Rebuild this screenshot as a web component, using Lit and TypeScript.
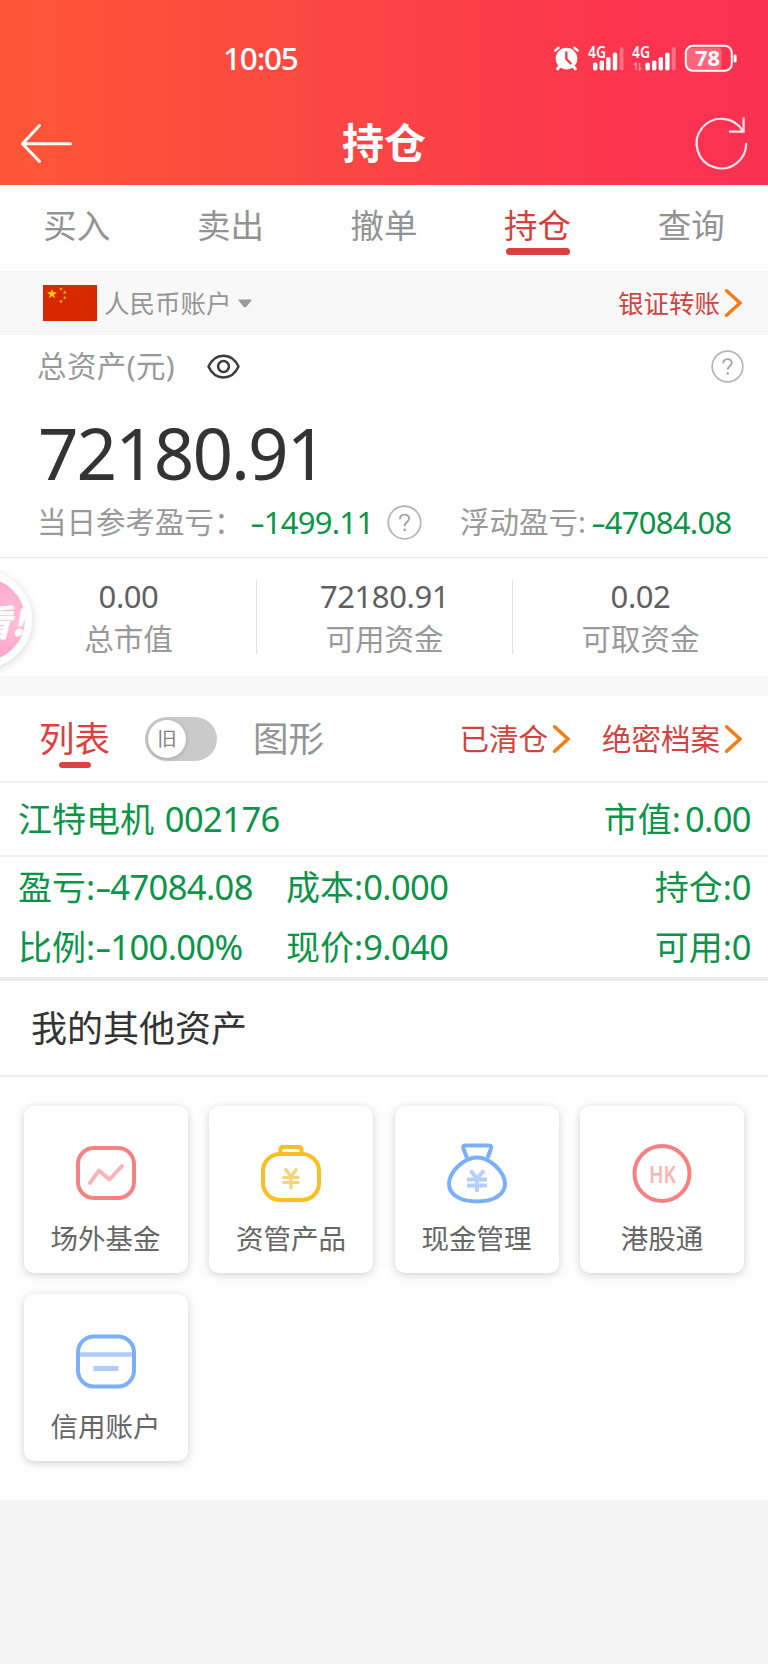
import { LitElement, html, svg, css } from "lit";
import { customElement, property, state } from "lit/decorators.js";

const base = css`
  :host {
    display: block;
    box-sizing: border-box;
    font-family: "Noto Sans", "Noto Sans CJK SC", sans-serif;
  }
  * {
    box-sizing: border-box;
  }
  svg {
    display: block;
    flex: none;
  }
  span,
  .t {
    white-space: nowrap;
    flex: none;
  }
  .minus {
    display: inline-block;
    width: 0.44em;
    transform: scaleX(1.5);
    transform-origin: left;
  }
`;

const chevron = html`<svg width="19" height="30" viewBox="0 0 19 30">
  <path d="M2.6 2.8 L16 15 L2.6 27.2" fill="none" stroke="#f57c14" stroke-width="3.5" stroke-linecap="round" />
</svg>`;

const minus = html`<span class="minus">-</span>`;

const help = (size: number) => html`<svg width=${size} height=${size} viewBox="0 0 34 34">
  <circle cx="17" cy="17" r="15.8" fill="none" stroke="#b4b4b4" stroke-width="1.7" />
  <path d="M12.6 13.8 C12.6 8 21.4 8 21.4 13.2 C21.4 16.6 17.2 16.6 17.2 20.4" fill="none" stroke="#a2a2a2" stroke-width="1.8" />
  <circle cx="17.2" cy="24.2" r="1.3" fill="#a2a2a2" />
</svg>`;

@customElement("top-header")
class TopHeader extends LitElement {
  static styles = [
    base,
    css`
      :host {
        height: 185px;
        color: #fff;
        background: linear-gradient(90deg, #ff5636 0%, #fb4643 45%, #fb334f 85%, #fa3252 100%);
      }
      .status {
        height: 100px;
        padding: 16px 0 0 223px;
        display: flex;
        align-items: center;
      }
      .time {
        width: 329px;
        font-size: 31.5px;
        font-weight: 500;
        line-height: 40px;
        letter-spacing: -1.2px;
      }
      .bar {
        height: 86px;
        display: grid;
        grid-template-columns: 96px 1fr 96px;
        align-items: center;
      }
      .title {
        text-align: center;
        font-family: "Noto Sans CJK SC", sans-serif;
        font-size: 42px;
        font-weight: 700;
        line-height: 60px;
        padding-bottom: 4px;
      }
      .small {
        font: 600 15.5px "Noto Sans", sans-serif;
      }
      .level {
        font: 700 22px "Noto Sans", sans-serif;
      }
    `,
  ];

  private bars(x: number, faint: number) {
    const tops = [61.5, 59.5, 56, 51.5];
    return svg`${tops.map(
      (y, i) => svg`<rect x=${x + i * 6.6} y=${y} width="4.4" height=${69.5 - y} rx="1.8" fill="#fff" />`
    )}<rect x=${faint} y="46" width="4" height="23.5" rx="1.8" fill="#fff" opacity=".3" />`;
  }

  render() {
    return html`
      <div class="status">
        <span class="time">10:05</span>
        <svg width="190" height="34" viewBox="552 40 190 34">
          <circle cx="566.5" cy="57.6" r="10.8" fill="#fff" />
          <path d="M560 65 L557.5 68 M573 65 L575.5 68" stroke="#fff" stroke-width="2.8" stroke-linecap="round" />
          <path d="M555.2 49.6 L558.6 46.8 M577.800 49.600 L574.400 46.800" stroke="#fff" stroke-width="2.4" stroke-linecap="round" />
          <path d="M566.3 51.500 V57.800 L570.600 62.400" fill="none" stroke="#fb3b4b" stroke-width="2.400" stroke-linecap="round" />
          <text class="small" x="588" y="57" fill="#fff" textLength="18" lengthAdjust="spacingAndGlyphs">4G</text>
          ${this.bars(593, 619.5)}
          <text class="small" x="632" y="57" fill="#fff" textLength="18" lengthAdjust="spacingAndGlyphs">4G</text>
          <path d="M634 64 L636 62 V69 M639.5 62 V69 L641.5 67" fill="none" stroke="#fff" stroke-width="1.5" opacity=".45" />
          ${this.bars(645.4, 671.7)}
          <rect x="687" y="46.5" width="34.5" height="22" rx="4" fill="#fff" opacity=".25" />
          <rect x="685.8" y="44.8" width="46" height="25" rx="7" fill="none" stroke="#fff" stroke-width="2" />
          <rect x="733.6" y="53.5" width="3" height="8" rx="1.4" fill="#fff" />
          <text class="level" x="695" y="65" fill="#fff" textLength="25" lengthAdjust="spacingAndGlyphs">78</text>
        </svg>
      </div>
      <div class="bar">
        <svg width="96" height="86" viewBox="0 100 96 86">
          <path d="M39.5 125.5 L22.5 143.7 L39.5 161.5 M22.5 143.7 H70.5" fill="none" stroke="#fff" stroke-width="3" stroke-linecap="round" stroke-linejoin="round" />
        </svg>
        <div class="title">持仓</div>
        <svg width="96" height="86" viewBox="672 100 96 86">
          <path d="M746.2 143 A24.8 24.8 0 1 1 742.5 130.5 M743.6 117.5 V131.6 H729" fill="none" stroke="#fff" stroke-opacity=".88" stroke-width="2.2" />
        </svg>
      </div>
    `;
  }
}

@customElement("trade-tabs")
class TradeTabs extends LitElement {
  @state() private active = 3;
  private labels = ["买入", "卖出", "撤单", "持仓", "查询"];
  static styles = [
    base,
    css`
      :host {
        height: 86px;
        background: #fefefe;
        display: grid;
        grid-template-columns: repeat(5, 1fr);
      }
      .tab {
        display: flex;
        flex-direction: column;
        align-items: center;
        padding-top: 15px;
        font-family: "Noto Sans CJK SC", sans-serif;
        font-size: 33.5px;
        line-height: 47px;
        color: #939393;
      }
      .on {
        color: #d5403d;
      }
      .on::after {
        content: "";
        width: 64px;
        height: 7px;
        margin-top: 1px;
        border-radius: 4px;
        background: #dc3f3f;
      }
    `,
  ];
  render() {
    return this.labels.map(
      (l, i) => html`<div class=${i === this.active ? "tab on" : "tab"} @click=${() => (this.active = i)}>${l}</div>`
    );
  }
}

@customElement("account-bar")
class AccountBar extends LitElement {
  static styles = [
    base,
    css`
      :host {
        height: 64px;
        background: #f8f8f8;
        display: flex;
        align-items: center;
        padding: 0 25px 0 43px;
        font-size: 25.5px;
        line-height: 36px;
      }
      .name {
        width: 134px;
        margin-left: 7px;
        color: #959595;
      }
      .link {
        display: flex;
        align-items: center;
        gap: 4px;
        margin-left: auto;
        color: #cf4340;
      }
    `,
  ];
  private star(cx: number, cy: number, r: number) {
    const p = Array.from({ length: 10 }, (_, i) => {
      const a = -Math.PI / 2 + (i * Math.PI) / 5;
      const k = i % 2 ? r * 0.4 : r;
      return `${(cx + k * Math.cos(a)).toFixed(2)},${(cy + k * Math.sin(a)).toFixed(2)}`;
    }).join(" ");
    return svg`<polygon points=${p} fill="#ffd500" />`;
  }
  render() {
    return html`
      <svg width="54" height="36" viewBox="0 0 54 36">
        <rect width="54" height="36" fill="#d82800" />
        ${this.star(9, 9, 5.2)} ${this.star(18, 4, 1.9)} ${this.star(21.7, 7.4, 1.9)} ${this.star(21.7, 12.8, 1.9)}
        ${this.star(18, 16.4, 1.9)}
      </svg>
      <span class="name">人民币账户</span>
      <svg width="14" height="9" viewBox="0 0 14 9"><path d="M1 .5 H13 Q14 .5 13.4 1.5 L8.4 7.8 Q7 9.2 5.6 7.8 L.6 1.5 Q0 .5 1 .5Z" fill="#999" /></svg>
      <div class="link"><span>银证转账</span>${chevron}</div>
    `;
  }
}

@customElement("asset-summary")
class AssetSummary extends LitElement {
  private stats = [
    ["0.00", "总市值"],
    ["72180.91", "可用资金"],
    ["0.02", "可取资金"],
  ];
  static styles = [
    base,
    css`
      :host {
        height: 341px;
        background: #fff;
        color: #999;
        font-size: 29.5px;
      }
      .head {
        height: 62px;
        display: flex;
        align-items: center;
        padding: 0 24px 0 37px;
        line-height: 42px;
        letter-spacing: 0.4px;
      }
      .head .t {
        width: 170px;
      }
      .head .q {
        margin-left: auto;
      }
      .total {
        height: 95px;
        padding: 6px 0 0 38px;
        font-size: 71px;
        line-height: 100px;
        letter-spacing: -2px;
        color: #333;
      }
      .pl {
        height: 60px;
        margin-bottom: 5px;
        display: flex;
        align-items: center;
        padding-left: 37px;
        line-height: 42px;
      }
      .day {
        width: 213px;
      }
      .dayv {
        width: 137px;
      }
      .float {
        width: 131px;
        margin-left: 38px;
      }
      .num {
        font-size: 31px;
        letter-spacing: -0.7px;
        color: #0c9448;
      }
      .stats {
        height: 119px;
        border-top: 1px solid #e6e6e6;
        display: grid;
        grid-template-columns: repeat(3, 1fr);
        padding-top: 22px;
      }
      .stat {
        height: 74px;
        text-align: center;
        border-left: 1px solid #e2e2e2;
      }
      .stat:first-child {
        border-left-color: transparent;
      }
      .v {
        font-size: 31px;
        line-height: 33px;
        letter-spacing: -0.4px;
        color: #5f5f5f;
      }
      .k {
        line-height: 51px;
      }
    `,
  ];
  render() {
    return html`
      <div class="head">
        <span class="t">总资产(元)</span>
        <svg width="33" height="25" viewBox="0 0 33 25">
          <path d="M1.5 12.5 C8 -2 25 -2 31.5 12.5 C25 27 8 27 1.5 12.5Z" fill="none" stroke="#3c3c3c" stroke-width="2.5" stroke-linejoin="round" />
          <circle cx="16.5" cy="12.5" r="5.4" fill="none" stroke="#3c3c3c" stroke-width="2.5" />
        </svg>
        <div class="q">${help(33)}</div>
      </div>
      <div class="total">72180.91</div>
      <div class="pl">
        <span class="day">当日参考盈亏：</span><span class="num dayv">${minus}1499.11</span>${help(35)}
        <span class="float">浮动盈亏:</span><span class="num">${minus}47084.08</span>
      </div>
      <div class="stats">
        ${this.stats.map(([v, k]) => html`<div class="stat"><div class="v">${v}</div><div class="k">${k}</div></div>`)}
      </div>
    `;
  }
}

@customElement("position-list")
class PositionList extends LitElement {
  static styles = [
    base,
    css`
      :host {
        background: #fff;
        color: #0c9448;
      }
      .tools {
        height: 87px;
        display: flex;
        align-items: center;
        padding: 0 25px 0 39px;
        border-bottom: 2px solid #efefef;
        font-size: 35.5px;
        color: #959595;
      }
      .list {
        width: 71px;
        height: 85px;
        padding-top: 18px;
        display: flex;
        flex-direction: column;
        align-items: center;
        line-height: 48px;
        color: #dc4140;
      }
      .list::after {
        content: "";
        width: 32px;
        height: 6px;
        border-radius: 3px;
        background: #e04242;
      }
      .switch {
        width: 72px;
        height: 44px;
        margin: 0 36px 0 35px;
        padding: 3px;
        border-radius: 22px;
        background: #cacaca;
      }
      .shape {
        line-height: 48px;
        padding-bottom: 2px;
      }
      .knob {
        width: 38px;
        height: 38px;
        border-radius: 50%;
        background: #fff;
        box-shadow: 0 1px 4px rgba(0, 0, 0, 0.2);
        text-align: center;
        font-size: 19.5px;
        line-height: 37px;
        color: #858585;
      }
      .link {
        display: flex;
        align-items: center;
        gap: 4px;
        font-size: 29.5px;
        line-height: 42px;
        color: #d04340;
      }
      .first {
        margin-left: auto;
        margin-right: 31px;
      }
      .stock {
        height: 74px;
        display: flex;
        justify-content: space-between;
        align-items: center;
        padding: 0 17px 0 18px;
        border-bottom: 2px solid #efefef;
        font-size: 34px;
        line-height: 48px;
      }
      .n {
        font-size: 34.5px;
        letter-spacing: -0.6px;
      }
      .code {
        margin-left: 2px;
      }
      .worth {
        margin-left: 4px;
      }
      .detail {
        height: 124px;
        display: grid;
        grid-template-columns: 268px 1fr auto;
        grid-template-rows: 60px 60px;
        padding: 0 17px 0 18px;
        border-bottom: 4px solid #ebebeb;
        font-size: 34px;
        line-height: 60px;
      }
    `,
  ];
  render() {
    return html`
      <div class="tools">
        <div class="list t">列表</div>
        <div class="switch"><div class="knob">旧</div></div>
        <span class="shape">图形</span>
        <div class="link first"><span>已清仓</span>${chevron}</div>
        <div class="link"><span>绝密档案</span>${chevron}</div>
      </div>
      <div class="stock">
        <span>江特电机 <span class="n code">002176</span></span>
        <span>市值:<span class="n worth">0.00</span></span>
      </div>
      <div class="detail">
        <span>盈亏:<span class="n">${minus}47084.08</span></span>
        <span>成本:<span class="n">0.000</span></span>
        <span>持仓:<span class="n">0</span></span>
        <span>比例:<span class="n">${minus}100.00%</span></span>
        <span>现价:<span class="n">9.040</span></span>
        <span>可用:<span class="n">0</span></span>
      </div>
    `;
  }
}

const icons: Record<string, unknown> = {
  fund: svg`<rect x="54" y="42" width="56" height="50" rx="16" fill="none" stroke="#f98080" stroke-width="4" />
    <path d="M66 77 L75 64.5 L85.5 73.5 L98 60" fill="none" stroke="#fbb4b6" stroke-width="4" stroke-linecap="round" stroke-linejoin="round" />`,
  manage: svg`<path d="M71.5 47 V43.5 Q71.5 41 74 41 H90 Q92.5 41 92.5 43.5 V47" fill="none" stroke="#fbbf24" stroke-width="4" />
    <rect x="54" y="48" width="56" height="46" rx="17" fill="none" stroke="#fbbf24" stroke-width="4" />
    <path d="M76 62.500 L82 70.500 L88 62.500 M73.500 71.500 H90.500 M73.500 76.500 H90.500 M82 71 V83" fill="none" stroke="#fcd27a" stroke-width="3.200" />`,
  cash: svg`<path d="M72 52 L68.500 42.500 Q67.500 39.500 70 39.500 H94 Q97 39.500 96 42.500 L92.500 52" fill="none" stroke="#7ab0fa" stroke-width="4" />
    <path d="M82 51.500 C95 51.500 110 66 110 78 C110 89 98 95.500 82 95.500 C66 95.500 54 89 54 78 C54 66 69 51.500 82 51.500Z" fill="none" stroke="#7ab0fa" stroke-width="4" />
    <path d="M75.500 64.500 L82 72.500 L89 64.500 M72 73.500 H92 M72 79.500 H92 M82 72 V86" fill="none" stroke="#b3cffa" stroke-width="3.900" />`,
  hk: svg`<circle cx="82" cy="67.500" r="27.500" fill="none" stroke="#f98080" stroke-width="4" />
    <text class="hk" x="69" y="77" textLength="27" lengthAdjust="spacingAndGlyphs" fill="#fbb4b6">HK</text>`,
  credit: svg`<path d="M56 60.500 H108" stroke="#b0cdfb" stroke-width="4.500" /><path d="M69.500 74.500 H94.500" stroke="#b0cdfb" stroke-width="5" />
    <rect x="54" y="42.500" width="56" height="50" rx="16" fill="none" stroke="#7ab0fa" stroke-width="4" />`,
};

@customElement("asset-card")
class AssetCard extends LitElement {
  @property() icon = "";
  @property() label = "";
  static styles = [
    base,
    css`
      :host {
        height: 167px;
        border-radius: 10px;
        background: #fff;
        box-shadow: 0 2px 9px rgba(0, 0, 0, 0.18);
      }
      .label {
        text-align: center;
        font-size: 27.5px;
        line-height: 40px;
        color: #666;
      }
      .hk {
        font: 600 24px "Noto Sans", sans-serif;
      }
    `,
  ];
  render() {
    return html`<svg width="164" height="113" viewBox="0 0 164 113">${icons[this.icon]}</svg>
      <div class="label">${this.label}</div>`;
  }
}

@customElement("other-assets")
class OtherAssets extends LitElement {
  private items = [
    ["fund", "场外基金"],
    ["manage", "资管产品"],
    ["cash", "现金管理"],
    ["hk", "港股通"],
    ["credit", "信用账户"],
  ];
  static styles = [
    base,
    css`
      :host {
        height: 519px;
        background: #fefefe;
      }
      .title {
        height: 96px;
        padding-left: 31px;
        border-bottom: 2px solid #efefef;
        font-size: 36px;
        line-height: 95px;
        color: #333;
      }
      .grid {
        display: grid;
        grid-template-columns: repeat(4, 164px);
        gap: 21px 21.5px;
        padding: 29px 0 0 23.5px;
      }
    `,
  ];
  render() {
    return html`<div class="title">我的其他资产</div>
      <div class="grid">
        ${this.items.map(([i, l]) => html`<asset-card icon=${i} label=${l}></asset-card>`)}
      </div>`;
  }
}

@customElement("app-root")
class AppRoot extends LitElement {
  static styles = [
    base,
    css`
      :host {
        position: relative;
        width: 768px;
        height: 1664px;
        overflow: hidden;
        background: #f4f4f4;
      }
      .band {
        height: 20px;
        background: #f8f8f8;
      }
      .badge {
        position: absolute;
        left: -65px;
        top: 571px;
        width: 97px;
        height: 97px;
        border-radius: 50%;
        border: 7px solid #fff;
        background: linear-gradient(180deg, #fba9cb, #fdbdd6 50%, #fda4c8);
        box-shadow: 0 2px 10px rgba(0, 0, 0, 0.16);
        display: flex;
        justify-content: flex-end;
        align-items: center;
        padding-right: 1px;
        font-family: "Noto Sans CJK SC", sans-serif;
        font-size: 36px;
        letter-spacing: -1px;
        font-weight: 900;
        font-style: italic;
        color: #fff;
      }
    `,
  ];
  render() {
    return html`
      <top-header></top-header>
      <trade-tabs></trade-tabs>
      <account-bar></account-bar>
      <asset-summary></asset-summary>
      <div class="band"></div>
      <position-list></position-list>
      <other-assets></other-assets>
      <div class="badge"><span>看!</span></div>
    `;
  }
}
